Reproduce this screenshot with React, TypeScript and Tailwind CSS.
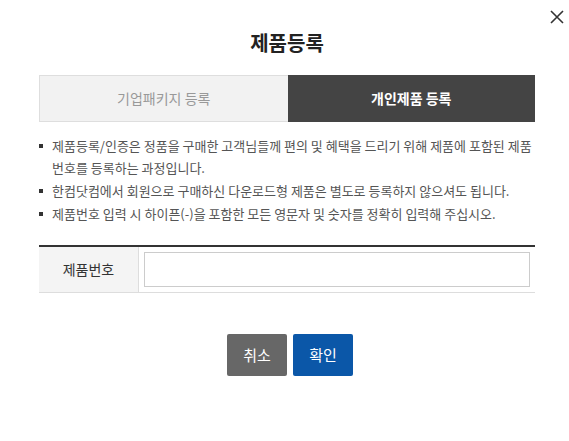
import React from 'react';

const notices: string[] = [
  '제품등록/인증은 정품을 구매한 고객님들께 편의 및 혜택을 드리기 위해 제품에 포함된 제품 번호를 등록하는 과정입니다.',
  '한컴닷컴에서 회원으로 구매하신 다운로드형 제품은 별도로 등록하지 않으셔도 됩니다.',
  '제품번호 입력 시 하이픈(-)을 포함한 모든 영문자 및 숫자를 정확히 입력해 주십시오.',
];

const App: React.FC = () => {
  return (
    <div className="relative w-[569px] h-[441px] bg-white font-['Noto_Sans_CJK_KR',sans-serif] text-[#333]">
      <button type="button" aria-label="닫기" className="absolute left-[549px] top-[9px] w-[16px] h-[16px] flex items-center justify-center">
        <svg width="14" height="14" viewBox="0 0 14 14" fill="none" stroke="#333" strokeWidth="1.6">
          <path d="M1 1L13 13M13 1L1 13" />
        </svg>
      </button>

      <div className="pl-[39px] w-[535px] pt-[30px]">
        <h2 className="text-center text-[20px] font-bold leading-[26px] text-[#222]">제품등록</h2>

        <div className="flex h-[47px] mt-[19px]">
          <button type="button" className="flex-1 flex items-center justify-center border border-r-0 border-[#dedede] bg-[#f2f2f2] text-[14px] text-[#999]">
            기업패키지 등록
          </button>
          <button type="button" className="flex-1 flex items-center justify-center bg-[#444] text-[14px] font-bold text-white">
            개인제품 등록
          </button>
        </div>

        <ul className="mt-[13px] text-[13px] leading-[22px] text-[#555]">
          {notices.map((text, i) => (
            <li key={i} className={`flex gap-[9px] ${i > 0 ? 'mt-[1px]' : ''}`}>
              <span className="shrink-0 w-[4px] h-[4px] mt-[9px] bg-[#333]" />
              <span>{text}</span>
            </li>
          ))}
        </ul>

        <div className="flex mt-[20px] border-t-2 border-t-[#333] border-b border-b-[#ddd]">
          <div className="w-[100px] shrink-0 flex items-center justify-center bg-[#f4f4f4] border-r border-[#ddd] text-[14px] text-[#333]">
            제품번호
          </div>
          <div className="flex-1 p-[5px]">
            <input autoFocus type="text" className="w-full h-[35px] border border-[#ccc] px-[4px] text-[14px] outline-none caret-[#333]" />
          </div>
        </div>

        <div className="flex justify-center gap-[6px] mt-[41px] pl-[6px]">
          <button type="button" className="w-[60px] h-[42px] rounded-[2px] bg-[#676767] text-[15px] text-white">취소</button>
          <button type="button" className="w-[60px] h-[42px] rounded-[2px] bg-[#0b57a8] text-[15px] text-white">확인</button>
        </div>
      </div>
    </div>
  );
};

export default App;
